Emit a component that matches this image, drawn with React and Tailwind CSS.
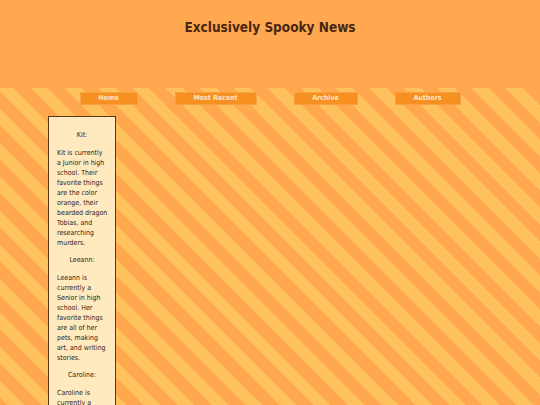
export default function App() {
  const font = { fontFamily: '"Comic Sans MS", "DejaVu Sans Condensed", "DejaVu Sans", sans-serif' }
  const nav = [
    { label: 'Home', w: 'w-[58px]' },
    { label: 'Most Recent', w: 'w-[82px]' },
    { label: 'Archive', w: 'w-[64px]' },
    { label: 'Authors', w: 'w-[66px]' },
  ]
  const authors = [
    {
      name: 'Kit:',
      bio: 'Kit is currently a Junior in high school. Their favorite things are the color orange, their bearded dragon Tobias, and researching murders.',
    },
    {
      name: 'Leeann:',
      bio: 'Leeann is currently a Senior in high school. Her favorite things are all of her pets, making art, and writing stories.',
    },
    {
      name: 'Caroline:',
      bio: 'Caroline is currently a Senior in high school. Her favorite things are reading, music, and her cats.',
    },
  ]

  return (
    <div className="flex h-[405px] flex-col overflow-hidden" style={font}>
      <header className="flex h-[88px] shrink-0 justify-center bg-[#ffa84f] pt-[18px]">
        <h1 className="text-[13.5px] font-bold leading-[18px] text-[#4a2712]">Exclusively Spooky News</h1>
      </header>
      <main className="flex-1 bg-[repeating-linear-gradient(45deg,#ffa84f_0px,#ffa84f_12px,#ffc15d_12px,#ffc15d_24px)]">
        <nav className="flex justify-center gap-[37px] pt-[4px]">
          {nav.map((n) => (
            <a
              key={n.label}
              className={`${n.w} flex h-[13px] items-center justify-center border border-[#f9a040] bg-[#f59021] text-[7px] font-bold text-[#ffe7c4]`}
            >
              {n.label}
            </a>
          ))}
        </nav>
        <aside className="ml-[48px] mt-[11px] h-[400px] w-[68px] border border-[#5a3518] bg-[#ffe9bf] pl-[8px] pr-[7px] pt-[13px] text-[7px] leading-[10px] text-[#33210f]">
          {authors.map((a) => (
            <div key={a.name} className="mb-[7px]">
              <p className="pr-[1px] text-center">{a.name}</p>
              <p className="mt-[8px]">{a.bio}</p>
            </div>
          ))}
        </aside>
      </main>
    </div>
  )
}
